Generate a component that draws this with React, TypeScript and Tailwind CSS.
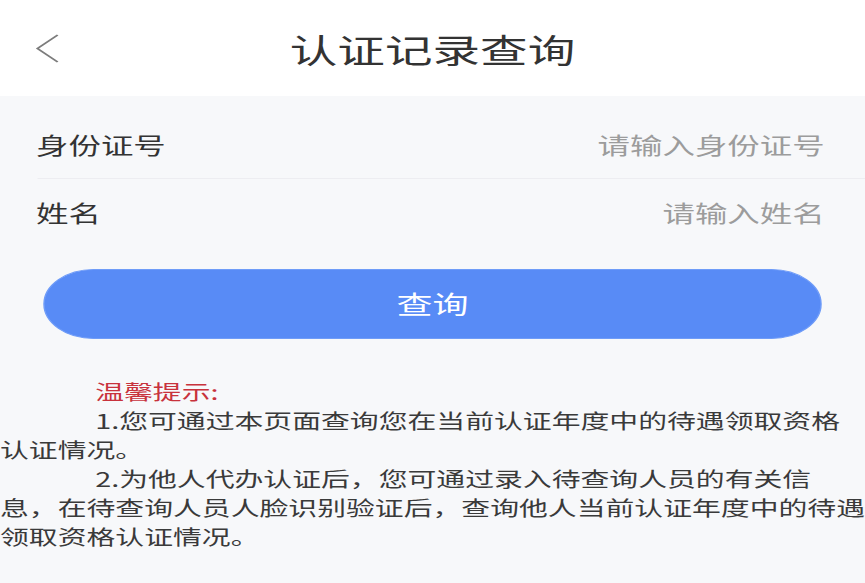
// The reference is a phone page stretched sideways; we lay it out at 600px and widen it.
const tips = [
  { text: "温馨提示:", indent: true, red: true },
  { text: "1.您可通过本页面查询您在当前认证年度中的待遇领取资格", indent: true },
  { text: "认证情况。" },
  { text: "2.为他人代办认证后，您可通过录入待查询人员的有关信", indent: true },
  { text: "息，在待查询人员人脸识别验证后，查询他人当前认证年度中的待遇" },
  { text: "领取资格认证情况。" },
];

export default function App() {
  return (
    <div className="min-h-screen w-[600px] origin-top-left scale-x-[1.4417] bg-[#f7f8fa] font-['Noto_Sans_CJK_SC',sans-serif] text-[#333]">
      <header className="grid h-[96px] grid-cols-[1fr_auto_1fr] items-center bg-white">
        <div className="pl-[22px]">
          <svg width="20" height="30" viewBox="0 0 20 30" fill="none">
            <path d="M18 2 L4 15.5 L18 29" stroke="#7d7d7d" strokeWidth="1.6" />
          </svg>
        </div>
        <h1 className="pt-[2px] text-[33px] leading-none font-normal text-[#333]">认证记录查询</h1>
        <div />
      </header>

      <div className="pt-[15px]">
        <div className="flex h-[67px] items-center justify-between pl-[25px] pr-[28px] text-[22.5px]">
          <span>身份证号</span>
          <span className="text-[#9c9c9c]">请输入身份证号</span>
        </div>
        <div className="ml-[26px] h-px bg-[#ededf1]" />
        <div className="flex h-[67px] items-center justify-between pl-[25px] pr-[28px] text-[22.5px]">
          <span>姓名</span>
          <span className="text-[#9c9c9c]">请输入姓名</span>
        </div>
      </div>

      <div className="mx-[30px] mt-[23px] flex h-[70px] items-center justify-center rounded-full border border-[#6f9cf8] bg-[#588bf6] text-[25px] text-white">
        查询
      </div>

      <div className="mt-[38px] text-[20px] leading-[29px] text-[#3a3a3a]">
        {tips.map((t, i) => (
          <p
            key={i}
            className={`whitespace-nowrap ${t.indent ? "pl-[66px]" : ""} ${t.red ? "text-[#c8323c]" : ""}`}
          >
            {t.text}
          </p>
        ))}
      </div>
    </div>
  );
}
